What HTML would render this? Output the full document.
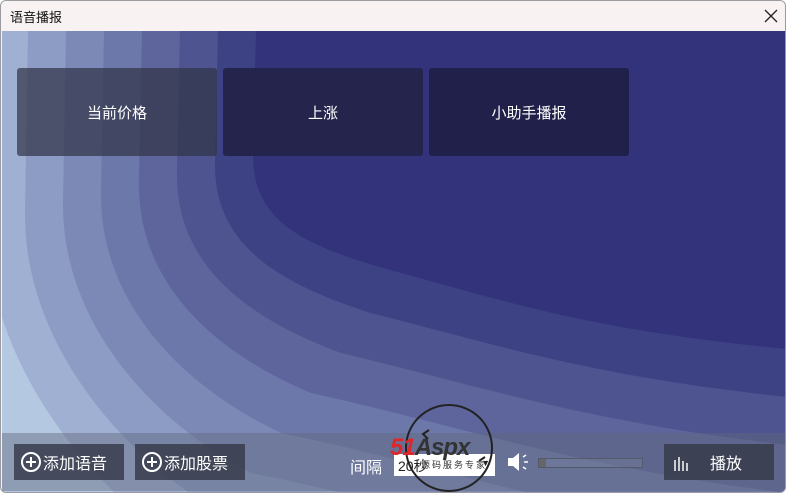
<!DOCTYPE html>
<html><head><meta charset="utf-8"><style>
*{margin:0;padding:0;box-sizing:border-box}
html,body{width:786px;height:493px;overflow:hidden}
body{font-family:"Liberation Sans","Noto Sans CJK SC",sans-serif;background:#fff;position:relative}
svg{display:block}
.win{position:absolute;left:0;top:0;width:786px;height:493px;border:1px solid #9a9aa0;border-radius:6px;overflow:hidden;background:#f7f3f3}
.title{position:absolute;left:0;top:0;width:786px;height:30px;background:#f8f2f2;font-size:13px;color:#111;padding:6px 0 0 9px}
.bg{position:absolute;left:0;top:0}
.card{position:absolute;top:67px;width:200px;height:88px;border-radius:3px;color:#fff;font-size:15px;display:flex;align-items:center;justify-content:center}
.bar{position:absolute;left:1px;top:432px;width:783px;height:58px;background:rgba(95,105,125,0.45)}
.btn{position:absolute;top:443px;height:36px;background:rgba(52,57,72,0.82);color:#fff;font-size:16px;display:flex;align-items:center}
.plus{width:20px;height:20px;border:2px solid #fff;border-radius:50%;position:relative;margin:0 2px 0 7px}
.plus:before{content:"";position:absolute;left:3px;top:7px;width:10px;height:2px;background:#fff}
.plus:after{content:"";position:absolute;left:7px;top:3px;width:2px;height:10px;background:#fff}
</style></head><body>
<div class="win">
<div class="title">语音播报</div>
<svg style="position:absolute;left:763px;top:8px" width="14" height="14"><path d="M1 1L13 13M13 1L1 13" stroke="#222" stroke-width="1.3"/></svg>
<svg class="bg" width="786" height="493">
<clipPath id="c"><rect x="1" y="30" width="783" height="462"/></clipPath>
<g clip-path="url(#c)">
<rect x="0" y="30" width="786" height="463" fill="#b5c8e2"/>
<path d="M-11,30 L-14,220 C-16,360 90,490 190,552 C380,585 540,650 900,700 L900 30Z" fill="#a0b0d2"/>
<path d="M27,30 L24,210 C22,340 120,455 220,512 C400,545 545,600 900,640 L900 30Z" fill="#8d9cc4"/>
<path d="M65,30 L62,200 C60,320 150,420 250,472 C420,505 550,555 786,588 L900 30Z" fill="#7c89b6"/>
<path d="M103,30 L100,190 C98,300 180,385 280,432 C440,465 560,510 786,540 L900 30Z" fill="#6c78aa"/>
<path d="M141,30 L138,180 C136,280 210,350 310,392 C460,425 570,465 786,492 L900 30Z" fill="#5d659c"/>
<path d="M179,30 L176,170 C174,260 240,315 340,352 C480,385 580,420 786,444 L900 30Z" fill="#4d548f"/>
<path d="M217,30 L214,160 C212,240 270,280 370,312 C500,345 590,375 786,396 L900 30Z" fill="#3d4285"/>
<path d="M255,30 L252,150 C250,220 300,245 400,272 C520,305 600,330 786,348 L900 30Z" fill="#32337a"/>
</g>
</svg>
<div class="card" style="left:16px;background:rgba(50,52,72,0.72)">当前价格</div>
<div class="card" style="left:222px;background:#24244c">上涨</div>
<div class="card" style="left:428px;background:#20204a">小助手播报</div>
<div class="bar"></div>
<div class="btn" style="left:13px;width:110px"><span class="plus"></span>添加语音</div>
<div class="btn" style="left:134px;width:110px"><span class="plus"></span>添加股票</div>
<div style="position:absolute;left:349px;top:453px;color:#fff;font-size:16px">间隔</div>
<div style="position:absolute;left:393px;top:453px;width:101px;height:22px;background:#fff;color:#222;font-size:14px;padding:2px 0 0 4px">20秒<span style="position:absolute;right:5px;top:4px;font-size:9px">▼</span></div>
<svg style="position:absolute;left:505px;top:450px" width="26" height="22"><path d="M2 7 H7 L13 2 V20 L7 15 H2Z" fill="#fff"/><path d="M17 6 L20 4 M18 11 H22 M17 16 L20 18" stroke="#fff" stroke-width="1.5"/></svg>
<div style="position:absolute;left:537px;top:457px;width:105px;height:10px;border:1px solid #555a6a;background:rgba(120,130,160,0.4)"><div style="width:7px;height:8px;background:#666"></div></div>
<div class="btn" style="left:663px;width:110px"><svg width="24" height="20" style="margin:0 14px 0 8px"><path d="M3 8V19 M7 5V19 M11 9V19 M15 11V19" stroke="#eee" stroke-width="1.6"/></svg>播放</div>
<svg style="position:absolute;left:400px;top:400px" width="100" height="92"><circle cx="48" cy="47" r="43" fill="none" stroke="#222" stroke-width="2"/><path d="M28 29 L22 33 L27 38 M78 60 L84 56" stroke="#222" stroke-width="2" fill="none"/></svg>
<div style="position:absolute;left:389px;top:433px;font-size:24px;line-height:28px;font-weight:bold;font-style:italic;letter-spacing:-1px"><span style="color:#e0252b">51</span><span style="color:#333">Aspx</span></div>
<div style="position:absolute;left:420px;top:459px;font-size:9px;line-height:11px;color:#333;letter-spacing:2px">源码服务专家</div>
</div>
</body></html>
